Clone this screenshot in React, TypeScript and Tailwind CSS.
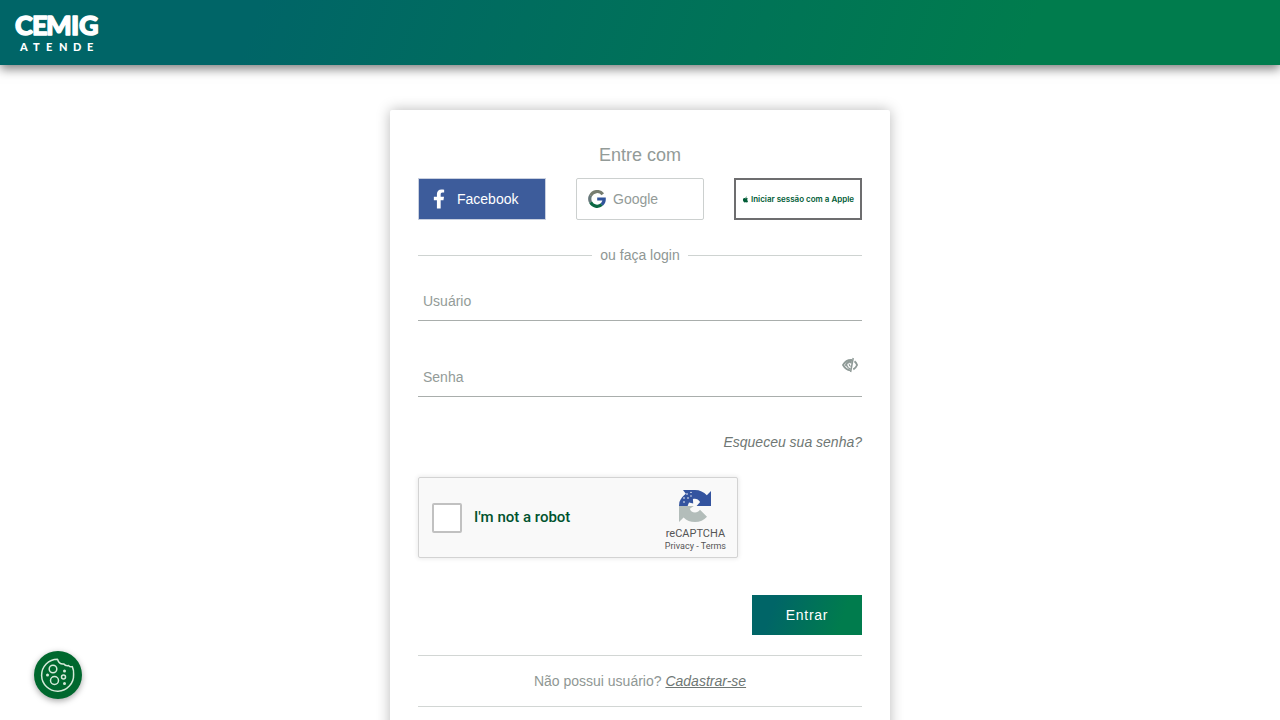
import { FaApple, FaFacebookF } from 'react-icons/fa'

function CemigLogo() {
  return (
    <svg className="h-16 w-22" viewBox="0 0 88 64" fill="#fff" role="img" aria-label="Cemig Atende">
      <g fontFamily="Lato, sans-serif" fontWeight="900">
        <text x="1 18 32 57 65" y="34" fontSize="27" stroke="#fff" strokeWidth="1.4" strokeLinejoin="round">
          CEMIG
        </text>
        <text x="6 19 32 45 59 73" y="50" fontSize="11">
          ATENDE
        </text>
      </g>
    </svg>
  )
}

function GoogleIcon() {
  return (
    <svg className="size-[18px]" viewBox="0 0 18 18" fill="none" strokeWidth="3.2" aria-hidden="true">
      <path d="M14.8 4.2A7.3 7.3 0 0 0 2.6 5.6" stroke="#777d70" />
      <path d="M2.6 5.6A7.3 7.3 0 0 0 2.6 12.3" stroke="#66777a" />
      <path d="M2.6 12.3A7.3 7.3 0 0 0 13.8 14.6" stroke="#0b6843" />
      <path d="M13.8 14.6A7.3 7.3 0 0 0 16.2 9H9.2" stroke="#31549b" />
    </svg>
  )
}

function HiddenEyeIcon() {
  return (
    <svg className="size-4" viewBox="0 0 16 16" fill="none" stroke="#8f9a97" aria-hidden="true">
      <path d="M11.2 1 8.6 15" strokeWidth="1.5" />
      <path d="M9.9 3C6 2.6 3 4.7 1 8c1.6 2.8 4.2 5 7.4 5.4" strokeWidth="1.8" />
      <path d="M10 3 9.4 6.4C8.6 5.7 7.2 5.6 6.4 6.2 5 6.4 4.8 8 5 9.2L3 8.6C3.6 5.6 6 3 10 3z" fill="#8f9a97" strokeWidth=".6" />
      <path d="M5.2 8.5c.2 1.8 1.4 3 3.4 3.4M7.3 7.2c-.2 1.1.4 1.9 1.4 2.1" strokeWidth="1.2" />
      <path d="M12.5 4.2C13.7 5.2 14.5 6.4 15.1 8c-.8 2-2 3.4-3.8 4.4" strokeWidth="1.8" />
    </svg>
  )
}

function RecaptchaLogo() {
  return (
    <svg className="h-8 w-8" viewBox="0 0 32 32" aria-hidden="true">
      <path
        d="M0 16V32l4.6-4.6C7.5 30.5 11.5 32 16 32c4.8 0 9-2 12-5.3l-7-6.9c-1.4 1.8-3 2.8-5 2.8-2.6 0-4.6-1.5-5.2-3.8l4-2.8z"
        fill="#b3bdba"
      />
      <path
        d="M32 16V1l-4.2 4.3C24.8 2 20.7 0 16 0H4l2.8 3.8C4 6 2 8.5.4 12L0 16h8.6l1.4-3.4 4.2 1-.3-4.6c2.7-.9 5.7.2 7.2 3l-3.5 4z"
        fill="#34549f"
      />
      <g fill="#fff">
        <circle cx="5" cy="8" r=".8" />
        <circle cx="8" cy="4" r=".8" />
        <circle cx="9" cy="8" r=".8" />
        <circle cx="5" cy="12" r=".8" />
        <circle cx="12" cy="6" r=".7" />
        <circle cx="12" cy="2.4" r=".7" />
      </g>
    </svg>
  )
}

function CookieIcon() {
  return (
    <svg className="size-9" viewBox="0 0 36 36" fill="none" stroke="#d5ead9" strokeWidth="1.5" aria-hidden="true">
      <path
        d="M17.5 2.2A16 16 0 1 0 33.6 17.5C33.8 14.5 33.4 12 32.3 9.6c-1.4.5-2.8.1-3.6-1-2 .4-3.9-.2-4.8-1.6-2.6.4-5.2-.8-6.4-4.8z"
        strokeLinejoin="round"
      />
      <circle cx="13" cy="12" r="3.8" />
      <circle cx="14.5" cy="23.5" r="4" />
      <circle cx="23.5" cy="20" r="2" />
      <g fill="#d5ead9" stroke="none">
        <circle cx="24.5" cy="14" r="1.5" />
        <circle cx="7.5" cy="18" r="1.5" />
        <circle cx="24.5" cy="26.5" r="1.5" />
      </g>
    </svg>
  )
}

function SocialButtons() {
  return (
    <div className="mt-[11px] grid grid-cols-3 gap-[30px]">
      <button className="flex h-[42px] items-center gap-3 border border-[#c9d0df] bg-[#3d5c9b] pl-3.5 text-sm text-white">
        <FaFacebookF className="h-5 w-3" />
        Facebook
      </button>
      <button className="flex h-[42px] items-center gap-[7px] rounded-xs border border-[#ccd0cf] pl-[11px] text-sm text-[#939b98]">
        <GoogleIcon />
        Google
      </button>
      <button className="flex h-[42px] items-center justify-center gap-0.5 border-2 border-[#6d6d6f] font-[Inter] text-[8px] font-semibold whitespace-nowrap text-[#005c36]">
        <FaApple className="size-[7px]" />
        Iniciar sessão com a Apple
      </button>
    </div>
  )
}

function Recaptcha() {
  return (
    <div className="mt-[25px] flex h-[81px] w-80 items-center rounded-xs border border-[#d3d3d3] bg-[#f9f9f9] pr-[11px] pl-[13px] font-[Roboto] shadow-[0_0_4px_1px_rgba(0,0,0,0.08)]">
      <input
        id="robot"
        type="checkbox"
        className="size-[30px] appearance-none rounded-xs border-2 border-[#c1c1c1] bg-white"
      />
      <label htmlFor="robot" className="ml-3 text-[15px] font-medium text-[#00532e]">
        I'm not a robot
      </label>
      <div className="ml-auto flex flex-col items-center pt-1 text-[#555]">
        <RecaptchaLogo />
        <span className="mt-1 text-[11px] leading-4">reCAPTCHA</span>
        <span className="text-[9px] leading-2">
          <a href="#privacy">Privacy</a> - <a href="#terms">Terms</a>
        </span>
      </div>
    </div>
  )
}

export default function App() {
  return (
    <div className="min-h-screen bg-white font-['Liberation_Sans',Arial,sans-serif] text-[#8f9794]">
      <header className="relative flex h-[65px] items-center bg-[linear-gradient(110deg,#006567_20%,#007c4d_80%)] px-3.5 shadow-[0_4px_10px_rgba(0,0,0,0.5)]">
        <a href="#inicio">
          <CemigLogo />
        </a>
      </header>

      <main className="px-4 pt-[45px]">
        <section className="mx-auto max-w-[500px] rounded-xs bg-white px-7 pt-[33px] pb-10 shadow-[0_0_14px_rgba(0,0,0,0.28)]">
          <h1 className="text-center text-lg leading-6 text-[#939b98]">Entre com</h1>
          <SocialButtons />

          <div className="mt-[25px] flex items-center gap-2 text-sm leading-5">
            <span className="h-px flex-1 bg-[#ced3d1]" />
            ou faça login
            <span className="h-px flex-1 bg-[#ced3d1]" />
          </div>

          <form onSubmit={(e) => e.preventDefault()}>
            <input
              type="text"
              aria-label="Usuário"
              placeholder="Usuário"
              className="mt-4 h-10 w-full border-b border-[#a9aeac] px-[5px] text-sm outline-none placeholder:text-[#939b98]"
            />

            <div className="relative mt-9">
              <input
                type="password"
                aria-label="Senha"
                placeholder="Senha"
                className="h-10 w-full border-b border-[#a9aeac] px-[5px] pr-8 text-sm outline-none placeholder:text-[#939b98]"
              />
              <button type="button" aria-label="Mostrar senha" className="absolute top-0 right-1">
                <HiddenEyeIcon />
              </button>
            </div>

            <div className="mt-[35px] text-right text-sm leading-5 text-[#6f7774] italic">
              <a href="#senha">Esqueceu sua senha?</a>
            </div>

            <Recaptcha />

            <div className="mt-[37px] flex justify-end">
              <button
                type="submit"
                className="h-10 w-[110px] bg-[linear-gradient(110deg,#006567_20%,#007c4d_80%)] text-sm tracking-wider text-white"
              >
                Entrar
              </button>
            </div>
          </form>

          <p className="mt-5 border-y border-[#d2d6d4] py-[15px] text-center text-sm leading-5">
            Não possui usuário?{' '}
            <a href="#cadastro" className="text-[#6f7774] italic underline">
              Cadastrar-se
            </a>
          </p>
        </section>
      </main>

      <button
        aria-label="Preferências de cookies"
        className="fixed bottom-[21px] left-[34px] flex size-12 items-center justify-center rounded-full bg-[#00682e] shadow-[0_2px_6px_rgba(0,0,0,0.35)]"
      >
        <CookieIcon />
      </button>
    </div>
  )
}
